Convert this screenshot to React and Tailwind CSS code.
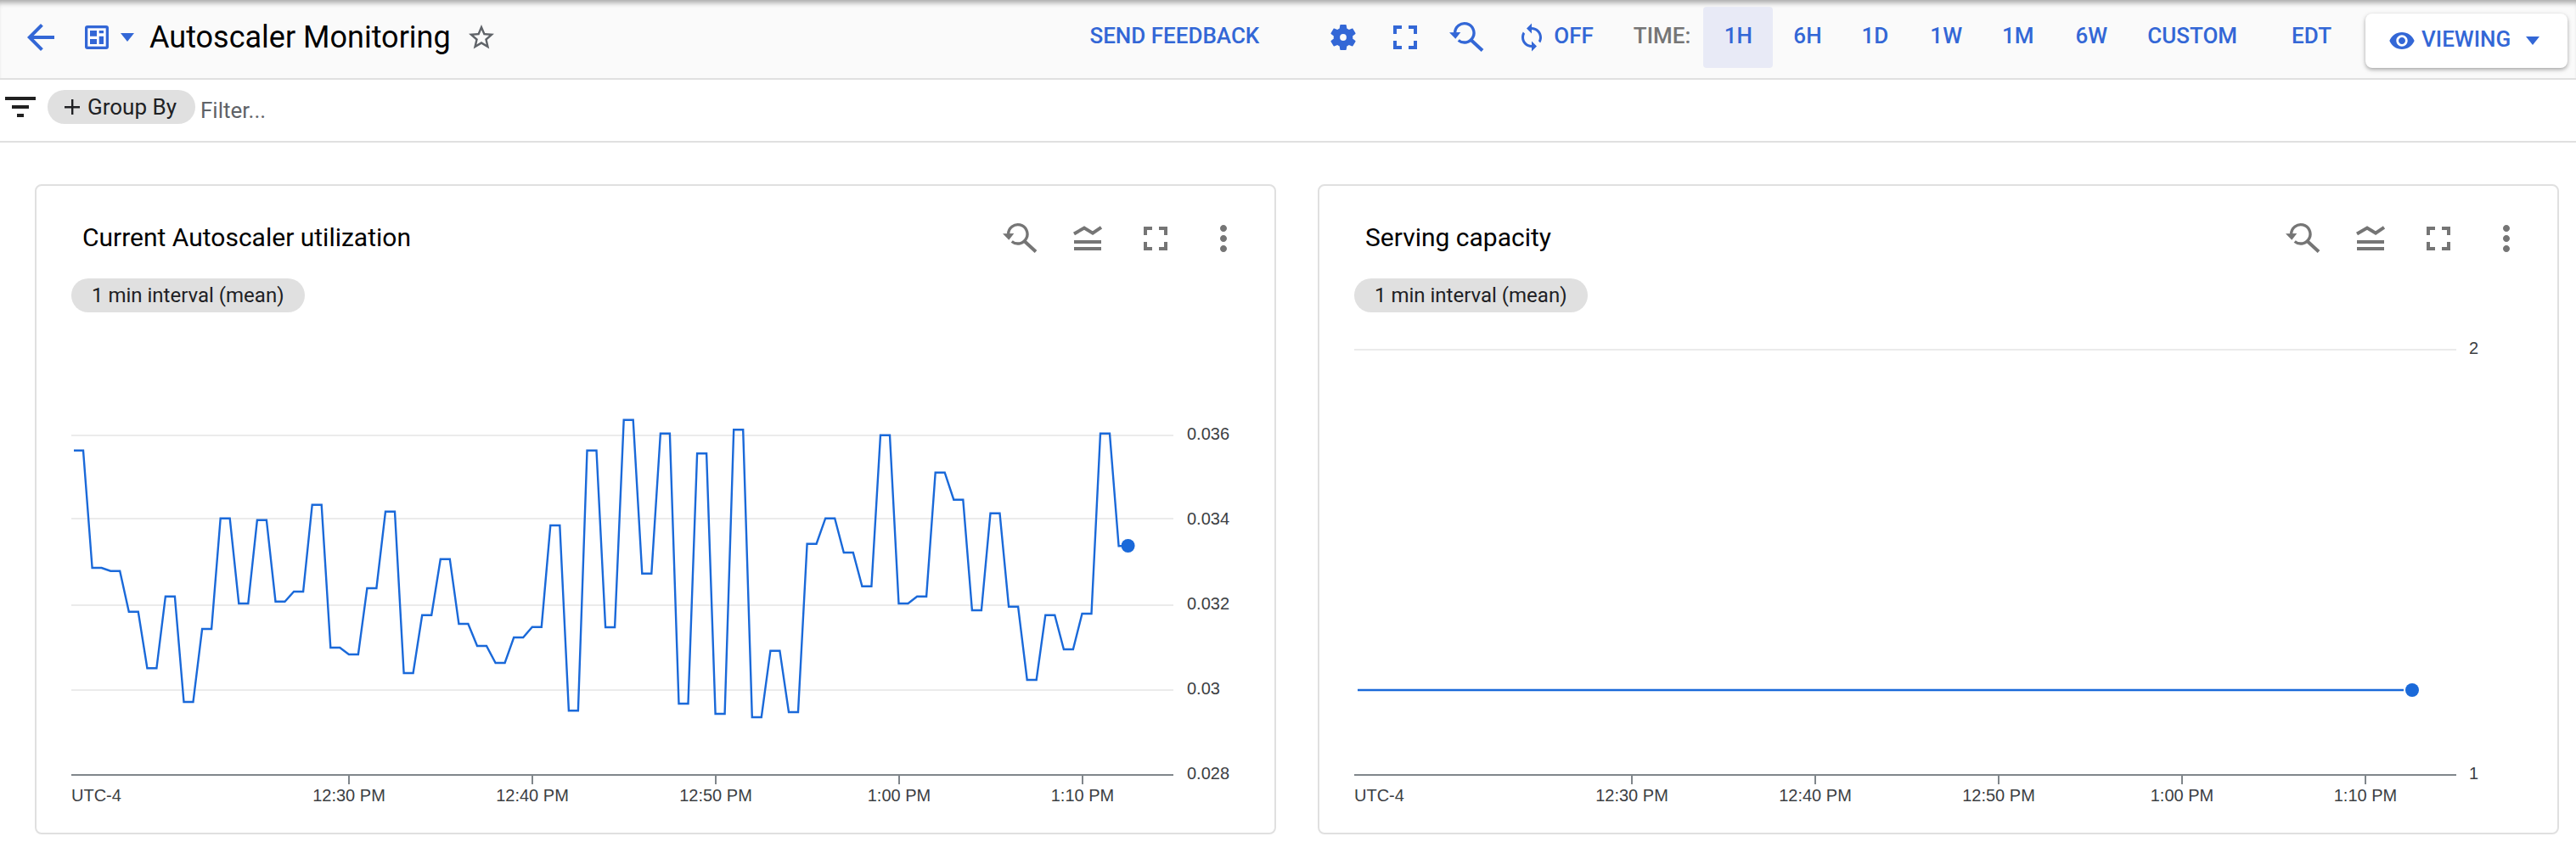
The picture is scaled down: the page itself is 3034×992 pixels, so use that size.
const BLUE = '#3367d6';
const LINE = '#1a69d9';

// y of each one-minute sample, sampled off the chart
const utilization = [
  530.7, 669, 672.7, 720.7, 787.3, 702.7, 827, 741, 610.7, 711, 612.7, 708.7, 697, 594.7, 763, 771,
  693, 602.7, 793, 724.7, 658.7, 735, 761, 781, 751, 738.7, 619, 837.3, 530.7, 739, 494.7, 675.7,
  510.7, 829, 534.3, 841, 506.3, 845, 766.7, 839, 640.7, 610.7, 651, 690.7, 512.7, 711, 702.7, 556.7,
  588.7, 719, 604.7, 714.7, 801, 724.7, 765, 723, 510.7, 643.3,
];

const linePoints = utilization
  .map((y, i) => {
    const x = 87 + i * 21.59;
    return `${x.toFixed(1)},${y} ${(x + 11).toFixed(1)},${y}`;
  })
  .join(' ');

const ticks = [
  { x: 411, label: '12:30 PM' },
  { x: 627, label: '12:40 PM' },
  { x: 843, label: '12:50 PM' },
  { x: 1059, label: '1:00 PM' },
  { x: 1275, label: '1:10 PM' },
];

const FULLSCREEN = 'M7 14H5v5h5v-2H7v-3zm-2-4h2V7h3V5H5v5zm12 7h-3v2h5v-5h-2v3zM14 5v2h3v3h2V5h-5z';

function FullscreenIcon({ className }) {
  return (
    <svg viewBox="0 0 24 24" fill="currentColor" className={className}>
      <path d={FULLSCREEN} />
    </svg>
  );
}

function ResetZoomIcon({ className }) {
  return (
    <svg viewBox="0 0 48 48" className={className}>
      <path d="M10.6 18.7A11.2 11.2 0 1 1 14.7 27.5" fill="none" stroke="currentColor" strokeWidth="3.4" />
      <path d="M29.7 27.3L43 39.5" fill="none" stroke="currentColor" strokeWidth="4" />
      <path d="M4 18.3L17.3 18L11.3 25.7z" fill="currentColor" />
    </svg>
  );
}

function Caret({ className }) {
  return (
    <svg viewBox="0 0 16 10" fill="currentColor" className={className}>
      <path d="M0 0h16L8 10z" />
    </svg>
  );
}

function CardIcons() {
  return (
    <div className="flex items-center gap-8 text-[#757575]">
      <ResetZoomIcon className="w-12 h-12" />
      <svg viewBox="0 0 24 24" className="w-12 h-12">
        <path d="M4 13h16v2H4zM4 17h16v2H4z" fill="currentColor" />
        <path d="M4 9.2L10 5.8L15 8.8L20 5.4" fill="none" stroke="currentColor" strokeWidth="2" />
      </svg>
      <FullscreenIcon className="w-12 h-12" />
      <svg viewBox="0 0 24 24" fill="currentColor" className="w-12 h-12">
        <path d="M12 8c1.1 0 2-.9 2-2s-.9-2-2-2-2 .9-2 2 .9 2 2 2zm0 2c-1.1 0-2 .9-2 2s.9 2 2 2 2-.9 2-2-.9-2-2-2zm0 6c-1.1 0-2 .9-2 2s.9 2 2 2 2-.9 2-2-.9-2-2-2z" />
      </svg>
    </div>
  );
}

function ChartCard({ title, children }) {
  return (
    <div className="w-[1462px] h-[766px] shrink-0 border-2 border-[#e0e0e0] rounded-lg bg-white overflow-hidden">
      <div className="flex items-center justify-between h-[64px] mt-[30px] pl-[54px] pr-[36px]">
        <h2 className="pb-[3px] text-[30px] font-normal text-[#000000]">{title}</h2>
        <CardIcons />
      </div>
      <div className="ml-[41px] mt-[15px] w-fit h-10 px-6 flex items-center rounded-full bg-[#e0e0e0] text-[24px] text-[#202124]">
        1 min interval (mean)
      </div>
      {children}
    </div>
  );
}

function Axis() {
  return (
    <g className='font-["Liberation_Sans",sans-serif] text-[20px] fill-[#3c4043]'>
      <line x1="84" x2="1382" y1="913" y2="913" stroke="#80868b" strokeWidth="2" />
      <text x="84" y="944">UTC-4</text>
      {ticks.map((t) => (
        <g key={t.label}>
          <line x1={t.x} x2={t.x} y1="913" y2="924" stroke="#80868b" strokeWidth="2" />
          <text x={t.x} y="944" textAnchor="middle">{t.label}</text>
        </g>
      ))}
    </g>
  );
}

const GRID_CLASS = 'font-["Liberation_Sans",sans-serif] text-[20px] fill-[#3c4043]';

export default function App() {
  return (
    <div className="w-[3034px] h-[992px] overflow-hidden bg-white font-['Roboto',sans-serif]">
      {/* Top bar */}
      <header className="h-[94px] pt-2 bg-[#fafafa] border-b-2 border-[#e0e0e0] shadow-[inset_0_7px_6px_-4px_rgba(0,0,0,0.35)] flex items-start text-[#3367d6] text-[26px] font-medium">
        <div className="h-[72px] flex items-center">
          <svg viewBox="0 0 24 24" fill="currentColor" className="w-12 h-12 ml-6">
            <path d="M20 11H7.83l5.59-5.59L12 4l-8 8 8 8 1.41-1.41L7.83 13H20v-2z" />
          </svg>
          <svg viewBox="0 0 28 28" className="w-7 h-7 ml-7">
            <rect width="28" height="28" rx="3" fill={BLUE} />
            <rect x="3.3" y="3.3" width="21.4" height="21.4" fill="#fff" />
            <path d="M6 6h8v6.7H6zM6 16h8v6H6zM16.7 6H22v3.3h-5.3zM16.7 12.7H22V22h-5.3z" fill={BLUE} />
          </svg>
          <Caret className="w-4 h-2.5 ml-3.5" />
          <h1 className="ml-[18px] text-[36px] font-normal text-black whitespace-nowrap">Autoscaler Monitoring</h1>
          <svg viewBox="0 0 24 24" fill="#5f6368" className="w-9 h-9 ml-[18px]">
            <path d="M22 9.24l-7.19-.62L12 2 9.19 8.63 2 9.24l5.46 4.73L5.82 21 12 17.27 18.18 21l-1.63-7.03L22 9.24zM12 15.4l-3.76 2.27 1-4.28-3.32-2.88 4.38-.38L12 6.1l1.71 4.04 4.38.38-3.32 2.88 1 4.28L12 15.4z" />
          </svg>
        </div>
        <div className="h-[72px] ml-auto flex items-center whitespace-nowrap">
          <span className="pb-[3px]">SEND FEEDBACK</span>
          <svg viewBox="0 0 24 24" fill="currentColor" className="w-9 h-9 ml-[81px]">
            <path d="M19.43 12.98c.04-.32.07-.64.07-.98s-.03-.66-.07-.98l2.11-1.65c.19-.15.24-.42.12-.64l-2-3.46c-.12-.22-.39-.3-.61-.22l-2.49 1c-.52-.4-1.08-.73-1.69-.98l-.38-2.65C14.46 2.18 14.25 2 14 2h-4c-.25 0-.46.18-.49.42l-.38 2.65c-.61.25-1.17.59-1.69.98l-2.49-1c-.23-.09-.49 0-.61.22l-2 3.46c-.13.22-.07.49.12.64l2.11 1.65c-.04.32-.07.65-.07.98s.03.66.07.98l-2.11 1.65c-.19.15-.24.42-.12.64l2 3.46c.12.22.39.3.61.22l2.49-1c.52.4 1.08.73 1.69.98l.38 2.65c.03.24.24.42.49.42h4c.25 0 .46-.18.49-.42l.38-2.65c.61-.25 1.17-.59 1.69-.98l2.49 1c.23.09.49 0 .61-.22l2-3.46c.12-.22.07-.49-.12-.64l-2.11-1.65z" />
            <circle cx="12" cy="12" r="2.6" fill="#fafafa" />
          </svg>
          <FullscreenIcon className="w-12 h-12 ml-[31px]" />
          <ResetZoomIcon className="w-12 h-12 ml-6" />
          <svg viewBox="0 0 24 24" fill="currentColor" className="w-9 h-9 ml-[35px]">
            <path d="M12 4V1L8 5l4 4V6c3.31 0 6 2.69 6 6 0 1.01-.25 1.97-.7 2.8l1.46 1.46C19.54 15.03 20 13.57 20 12c0-4.42-3.58-8-8-8zm0 14c-3.31 0-6-2.69-6-6 0-1.01.25-1.97.7-2.8L5.24 7.74C4.46 8.97 4 10.43 4 12c0 4.42 3.58 8 8 8v3l4-4-4-4v3z" />
          </svg>
          <span className="ml-2 pb-[3px]">OFF</span>
          <span className="ml-[47px] pb-[3px] text-[#757575]">TIME:</span>
          <span className="ml-[15px] w-[82px] h-[72px] pb-[3px] flex items-center justify-center bg-[#e8eaf6] rounded-sm">1H</span>
          <span className="ml-6 pb-[3px]">6H</span>
          <span className="ml-[47px] pb-[3px]">1D</span>
          <span className="ml-[49px] pb-[3px]">1W</span>
          <span className="ml-[47px] pb-[3px]">1M</span>
          <span className="ml-[49px] pb-[3px]">6W</span>
          <span className="ml-[47px] pb-[3px]">CUSTOM</span>
          <span className="ml-[64px] pb-[3px]">EDT</span>
        </div>
        <button className="ml-[40px] mr-[10px] mt-2 w-[238px] h-16 flex items-center bg-white rounded-lg shadow-[0_2px_5px_rgba(0,0,0,0.35)] font-medium">
          <svg viewBox="0 0 24 24" fill="currentColor" className="w-8 h-8 ml-[27px]">
            <path d="M12 4.5C7 4.5 2.73 7.61 1 12c1.73 4.39 6 7.5 11 7.5s9.27-3.11 11-7.5c-1.73-4.39-6-7.5-11-7.5zM12 17c-2.76 0-5-2.24-5-5s2.24-5 5-5 5 2.24 5 5-2.24 5-5 5zm0-8c-1.66 0-3 1.34-3 3s1.34 3 3 3 3-1.34 3-3-1.34-3-3-3z" />
          </svg>
          <span className="ml-[7px] pb-[3px]">VIEWING</span>
          <Caret className="w-4 h-2.5 ml-[18px]" />
        </button>
      </header>

      {/* Filter row */}
      <div className="h-[74px] border-b-2 border-[#e0e0e0] flex items-center">
        <svg viewBox="0 0 36 24" fill="#212121" className="w-9 h-6 ml-1.5 mb-2">
          <path d="M0 0h36v4H0zM8 10h20v4H8zM14 20h8v4h-8z" />
        </svg>
        <div className="ml-3.5 h-10 w-[174px] mb-2 flex items-center rounded-full bg-[#e0e0e0] text-[26px] text-[#202124]">
          <svg viewBox="0 0 18 18" fill="currentColor" className="w-[18px] h-[18px] ml-5">
            <path d="M8 0h2.4v18H8zM0 8h18v2.4H0z" />
          </svg>
          <span className="ml-[9px]">Group By</span>
        </div>
        <span className="ml-1.5 text-[26px] text-[#5f6368]">Filter...</span>
      </div>

      {/* Charts */}
      <div className="flex gap-[49px] pl-[41px] pt-[49px]">
        <ChartCard title="Current Autoscaler utilization">
          <svg viewBox="43 370 1458 610" className="block w-[1458px] h-[610px] mt-[2px]">
            {[513, 611, 713, 813].map((y) => (
              <line key={y} x1="84" x2="1382" y1={y} y2={y} stroke="#ebebeb" strokeWidth="2" />
            ))}
            <Axis />
            <polyline points={linePoints} fill="none" stroke={LINE} strokeWidth="2.4" strokeLinejoin="miter" />
            <circle cx="1328.6" cy="643" r="8" fill={LINE} />
            <g className={GRID_CLASS}>
              <text x="1398" y="518">0.036</text>
              <text x="1398" y="618">0.034</text>
              <text x="1398" y="718">0.032</text>
              <text x="1398" y="818">0.03</text>
              <text x="1398" y="918">0.028</text>
            </g>
          </svg>
        </ChartCard>
        <ChartCard title="Serving capacity">
          <svg viewBox="43 370 1458 610" className="block w-[1458px] h-[610px] mt-[2px]">
            <line x1="84" x2="1382" y1="412" y2="412" stroke="#ebebeb" strokeWidth="2" />
            <Axis />
            <line x1="88" x2="1320" y1="813" y2="813" stroke={LINE} strokeWidth="2.4" />
            <circle cx="1330" cy="813" r="8" fill={LINE} />
            <g className={GRID_CLASS}>
              <text x="1397" y="417">2</text>
              <text x="1397" y="918">1</text>
            </g>
          </svg>
        </ChartCard>
      </div>
    </div>
  );
}
